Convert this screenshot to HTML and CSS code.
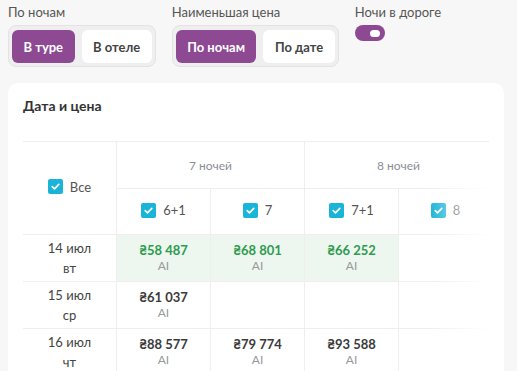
FILE: index.html
```html
<!DOCTYPE html>
<html lang="ru">

<head>
    <meta charset="UTF-8">
    <meta name="viewport" content="width=device-width, initial-scale=1.0">
    <title>Дата и цена</title>
    <link rel="stylesheet" href="styles.css">
</head>

<body>

    <div class="filters">
        <div class="filter">
            <div class="filter-label">По ночам</div>
            <div class="segment">
                <button class="seg-btn active">В туре</button>
                <button class="seg-btn">В отеле</button>
            </div>
        </div>
        <div class="filter">
            <div class="filter-label">Наименьшая цена</div>
            <div class="segment">
                <button class="seg-btn active">По ночам</button>
                <button class="seg-btn">По дате</button>
            </div>
        </div>
        <div class="filter">
            <div class="filter-label">Ночи в дороге</div>
            <span class="toggle"><span class="knob"></span></span>
        </div>
    </div>

    <div class="card">
        <h2 class="card-title">Дата и цена</h2>

        <div class="table-wrap">
            <table class="prices">
                <colgroup>
                    <col class="col-date">
                    <col class="col-night">
                    <col class="col-night">
                    <col class="col-night">
                    <col class="col-night">
                </colgroup>
                <tr class="row-head">
                    <th class="cell-all" rowspan="2">
                        <span class="check-item">
                            <span class="check"><svg viewBox="0 0 16 16"><path d="M4.5 8.2l2.4 2.3 4.6-4.8"/></svg></span>
                            Все
                        </span>
                    </th>
                    <th class="group-head" colspan="2">7 ночей</th>
                    <th class="group-head" colspan="2">8 ночей</th>
                </tr>
                <tr class="row-sub">
                    <th><span class="check-item"><span class="check"><svg viewBox="0 0 16 16"><path d="M4.5 8.2l2.4 2.3 4.6-4.8"/></svg></span>6+1</span></th>
                    <th><span class="check-item"><span class="check"><svg viewBox="0 0 16 16"><path d="M4.5 8.2l2.4 2.3 4.6-4.8"/></svg></span>7</span></th>
                    <th><span class="check-item"><span class="check"><svg viewBox="0 0 16 16"><path d="M4.5 8.2l2.4 2.3 4.6-4.8"/></svg></span>7+1</span></th>
                    <th><span class="check-item"><span class="check"><svg viewBox="0 0 16 16"><path d="M4.5 8.2l2.4 2.3 4.6-4.8"/></svg></span>8</span></th>
                </tr>
                <tr class="row-data">
                    <td class="date">14 июл<br>вт</td>
                    <td class="best"><div class="price">₴58 487</div><div class="meal">AI</div></td>
                    <td class="best"><div class="price">₴68 801</div><div class="meal">AI</div></td>
                    <td class="best"><div class="price">₴66 252</div><div class="meal">AI</div></td>
                    <td></td>
                </tr>
                <tr class="row-data">
                    <td class="date">15 июл<br>ср</td>
                    <td><div class="price">₴61 037</div><div class="meal">AI</div></td>
                    <td></td>
                    <td></td>
                    <td></td>
                </tr>
                <tr class="row-data">
                    <td class="date">16 июл<br>чт</td>
                    <td><div class="price">₴88 577</div><div class="meal">AI</div></td>
                    <td><div class="price">₴79 774</div><div class="meal">AI</div></td>
                    <td><div class="price">₴93 588</div><div class="meal">AI</div></td>
                    <td></td>
                </tr>
            </table>
            <div class="fade"></div>
        </div>
    </div>

</body>

</html>
```

FILE: styles.css
```css
* {
    margin: 0;
    padding: 0;
    box-sizing: border-box;
}

body {
    font-family: Lato, "Noto Sans", sans-serif;
    font-size: 13px;
    color: #444;
    background-color: #f7f7f7;
    height: 100vh;
    overflow: hidden;
}

.filters {
    display: flex;
    gap: 16px;
    padding: 4px 8px 0;
}

.filter-label {
    line-height: 16px;
    margin-bottom: 5px;
    color: #555;
}

.segment {
    display: flex;
    gap: 7px;
    padding: 4px 3px 3px;
    background-color: #efefef;
    border: 1px solid #e3e3e3;
    border-radius: 8px;
}

.seg-btn {
    height: 33px;
    padding: 0 11.5px;
    border: none;
    border-radius: 6px;
    background-color: #fff;
    font-family: inherit;
    font-size: 13px;
    font-weight: 700;
    color: #444;
}

.seg-btn.active {
    background-color: #8d4a93;
    color: #fff;
}

.toggle {
    display: flex;
    align-items: center;
    justify-content: flex-end;
    width: 30px;
    height: 16px;
    padding-right: 5px;
    border-radius: 8px;
    background-color: #8d4a93;
}

.knob {
    width: 10px;
    height: 7px;
    border-radius: 4px;
    background-color: #fff;
}

.card {
    width: 496px;
    height: 288px;
    margin: 16px 0 0 8px;
    padding: 14px 15px 0;
    background-color: #fff;
    border-radius: 10px 10px 0 0;
}

.card-title {
    font-size: 14px;
    font-weight: 700;
    line-height: 18px;
    color: #333;
    margin-bottom: 26px;
}

.table-wrap {
    position: relative;
    width: 466px;
    overflow: hidden;
}

.prices {
    width: 469px;
    table-layout: fixed;
    border-collapse: separate;
    border-spacing: 0;
}

.col-date {
    width: 93px;
}

.col-night {
    width: 94px;
}

.prices th,
.prices td {
    border-top: 1px solid #eeeeee;
    border-left: 1px solid #eeeeee;
    text-align: center;
    vertical-align: middle;
    font-weight: 400;
}

.prices .cell-all,
.prices .date {
    border-left: none;
}

.row-head {
    height: 47px;
}

.row-sub {
    height: 46px;
}

.row-data {
    height: 47px;
}

.row-data:first-of-type {
    height: 48px;
}

.group-head {
    font-size: 12px;
    color: #8a8e96;
}

.check-item {
    display: inline-flex;
    align-items: center;
    gap: 7px;
    font-size: 13px;
    color: #555;
}

.check {
    display: inline-block;
    width: 15px;
    height: 15px;
    border-radius: 2px;
    background-color: #19b4d8;
}

.check svg {
    display: block;
    width: 15px;
    height: 15px;
    fill: none;
    stroke: #fff;
    stroke-width: 1.8;
    stroke-linecap: round;
    stroke-linejoin: round;
}

.date {
    line-height: 20px;
    color: #444;
}

.price {
    font-weight: 700;
    line-height: 16px;
    color: #3a3a3a;
}

.meal {
    font-size: 12px;
    line-height: 16px;
    color: #999;
}

.best {
    background-color: #eef6f0;
}

.best .price {
    color: #2c9c4e;
}

/* правый край таблицы уходит в белое */
.fade {
    position: absolute;
    top: 1px;
    right: 0;
    bottom: 0;
    width: 60px;
    background: linear-gradient(to right, rgba(255, 255, 255, 0), #fff);
}
```
